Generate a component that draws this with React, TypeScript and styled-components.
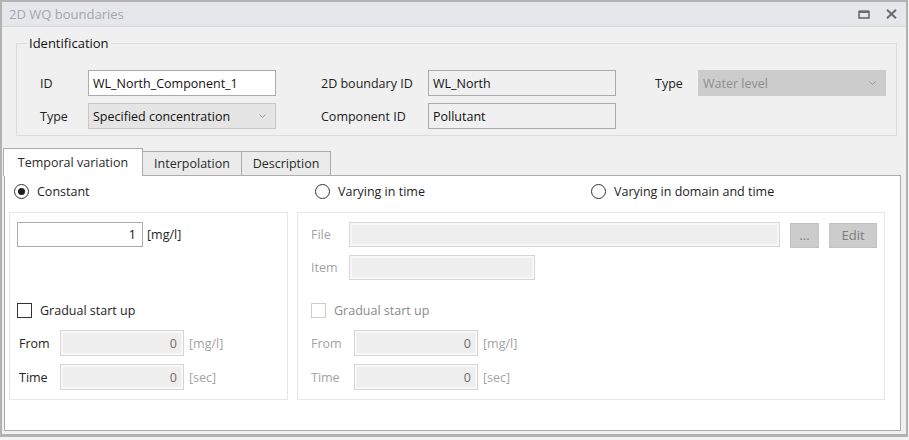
import React from 'react';
import styled, { createGlobalStyle } from 'styled-components';

const GlobalStyle = createGlobalStyle`
  html, body {
    margin: 0;
    padding: 0;
    background: #f3f3f3;
  }
  body {
    font-family: 'Open Sans', 'Noto Sans', sans-serif;
    font-size: 12.5px;
    color: #1e1e1e;
  }
  * {
    box-sizing: border-box;
  }
`;

const Window = styled.div`
  width: 908px;
  height: 437px;
  border: 2px solid #b2b2b2;
  border-bottom-width: 3px;
  background: #f0f0f0;
  display: flex;
  flex-direction: column;
`;

const TitleBar = styled.div`
  height: 25px;
  flex: none;
  display: flex;
  align-items: center;
  padding: 0 8px 0 7px;
  background: #e6e7eb;
  border-bottom: 1px solid #d6d7db;
  color: #a2a6ae;
  font-size: 13px;

  span {
    flex: 1;
  }
`;

const TitleButtons = styled.div`
  display: flex;
  align-items: center;
  gap: 16px;
  margin-right: 1px;
  color: #6b6b6b;

  svg {
    display: block;
  }
`;

const GroupBox = styled.fieldset`
  margin: 8px 9px 0 14px;
  padding: 19px 0 6px 10px;
  border: 1px solid #dcdcdc;
  min-width: 0;

  legend {
    padding: 0 2px;
    line-height: 16px;
    font-size: 13px;
    color: #111;
  }
`;

const IdRow = styled.div`
  display: flex;
  align-items: flex-start;
  margin-left: 13px;
`;

const FieldGroup = styled.div<{ $label: number; $offset: number }>`
  display: grid;
  grid-template-columns: ${p => p.$label}px 188px;
  grid-auto-rows: 26px;
  row-gap: 7px;
  align-items: center;
  margin-left: ${p => p.$offset}px;
`;

const Label = styled.span<{ $muted?: boolean }>`
  color: ${p => (p.$muted ? '#a3a3a3' : '#222')};
  white-space: nowrap;
`;

type BoxKind = 'edit' | 'readonly' | 'disabled';

const TextBox = styled.div<{ $kind: BoxKind; $width?: number; $height?: number; $right?: boolean }>`
  height: ${p => p.$height ?? 26}px;
  width: ${p => (p.$width ? `${p.$width}px` : 'auto')};
  display: flex;
  align-items: center;
  justify-content: ${p => (p.$right ? 'flex-end' : 'flex-start')};
  padding: 0 6px 0 4px;
  white-space: nowrap;
  background: ${p => (p.$kind === 'edit' ? '#ffffff' : p.$kind === 'readonly' ? '#f0f0f0' : '#eeeeee')};
  border: 1px solid ${p => (p.$kind === 'disabled' ? '#d6d6d6' : '#ababab')};
  box-shadow: ${p => (p.$kind === 'disabled' ? 'inset 0 0 0 2px #f8f8f8' : 'none')};
  color: ${p => (p.$kind === 'disabled' ? '#6a6a6a' : '#111')};
`;

const Combo = styled.div<{ $disabled?: boolean }>`
  height: 26px;
  display: flex;
  align-items: center;
  padding: 0 9px 0 4px;
  background: ${p => (p.$disabled ? '#cccccc' : '#e5e5e5')};
  border: 1px solid ${p => (p.$disabled ? '#cccccc' : '#c8c8c8')};
  color: ${p => (p.$disabled ? '#8e8e8e' : '#111')};

  span {
    flex: 1;
  }
`;

const TabArea = styled.div`
  flex: 1;
  display: flex;
  flex-direction: column;
  margin: 12px 5px 3px 0;
`;

const TabStrip = styled.div`
  display: flex;
  align-items: flex-end;
  height: 28px;
  padding-left: 1px;
  margin-bottom: -1px;
  position: relative;
  z-index: 1;
`;

const Tab = styled.div<{ $active?: boolean; $width: number }>`
  width: ${p => p.$width}px;
  height: ${p => (p.$active ? 28 : 24)}px;
  margin-bottom: ${p => (p.$active ? 0 : 1)}px;
  margin-left: ${p => (p.$active ? 0 : -1)}px;
  display: flex;
  align-items: center;
  justify-content: center;
  border: 1px solid #acacac;
  border-bottom: none;
  background: ${p => (p.$active ? '#ffffff' : '#ebebeb')};
  color: #2a2a2a;
  font-size: 12.5px;

  &:first-child {
    margin-left: 0;
  }
`;

const TabPanel = styled.div`
  flex: 1;
  margin-left: 2px;
  background: #ffffff;
  border: 1px solid #acacac;
  padding: 7px 0 0 0;
  display: flex;
  flex-direction: column;
`;

const RadioRow = styled.div`
  display: grid;
  grid-template-columns: 301px 276px 1fr;
  padding-left: 9px;
  height: 16px;
  align-items: center;
`;

const RadioItem = styled.label`
  display: flex;
  align-items: center;
  gap: 8px;
  color: #1e1e1e;
  font-size: 12.5px;
`;

const RadioCircle = styled.span<{ $checked?: boolean }>`
  width: 15px;
  height: 15px;
  border-radius: 50%;
  border: 1px solid #333;
  display: flex;
  align-items: center;
  justify-content: center;

  &::after {
    content: '';
    width: 7px;
    height: 7px;
    border-radius: 50%;
    background: ${p => (p.$checked ? '#1e1e1e' : 'transparent')};
  }
`;

const SubPanels = styled.div`
  display: grid;
  grid-template-columns: 279px 588px;
  column-gap: 9px;
  margin: 13px 0 0 4px;
  height: 188px;
`;

const SubPanel = styled.div<{ $pad: number }>`
  border: 1px solid #e6e6e6;
  padding: 9px 0 9px ${p => p.$pad}px;
  display: flex;
  flex-direction: column;
`;

const InlineRow = styled.div<{ $gap?: number }>`
  display: flex;
  align-items: center;
  gap: ${p => p.$gap ?? 4}px;
`;

const Unit = styled.span<{ $muted?: boolean }>`
  color: ${p => (p.$muted ? '#a3a3a3' : '#1e1e1e')};
`;

const FileGrid = styled.div`
  display: grid;
  grid-template-columns: 38px auto;
  grid-auto-rows: 25px;
  row-gap: 8px;
  align-items: center;
  justify-items: start;
`;

const GrayButton = styled.div<{ $width: number }>`
  width: ${p => p.$width}px;
  height: 25px;
  margin-top: 1px;
  display: flex;
  align-items: center;
  justify-content: center;
  background: #cccccc;
  border: 1px solid #c2c2c2;
  color: #7d7d7d;
  font-size: 13px;
`;

const Gradual = styled.div`
  margin-top: auto;
  display: flex;
  flex-direction: column;
`;

const CheckRow = styled.label<{ $disabled?: boolean }>`
  display: flex;
  align-items: center;
  gap: 8px;
  height: 17px;
  font-size: 12.5px;
  color: ${p => (p.$disabled ? '#8a8a8a' : '#1e1e1e')};
`;

const CheckBox = styled.span<{ $disabled?: boolean }>`
  width: 15px;
  height: 15px;
  border: 1px solid ${p => (p.$disabled ? '#cdcdcd' : '#333')};
  background: #fff;
`;

const RangeGrid = styled.div<{ $label: number; $indent: number }>`
  display: grid;
  grid-template-columns: ${p => p.$label}px 124px auto;
  grid-auto-rows: 26px;
  row-gap: 8px;
  align-items: center;
  margin: 11px 0 0 ${p => p.$indent}px;

  & > ${Unit} {
    margin-left: 5px;
  }
`;

const Chevron = () => (
  <svg width="7" height="4" viewBox="0 0 7 4">
    <path d="M0.5 0.5 L3.5 3.5 L6.5 0.5" fill="none" stroke="#9a9a9a" strokeWidth="1" />
  </svg>
);

const MaximizeIcon = () => (
  <svg width="12" height="9" viewBox="0 0 12 9">
    <rect x="1" y="1.5" width="10" height="6.5" fill="none" stroke="currentColor" strokeWidth="1.6" />
    <rect x="1" y="0.5" width="10" height="2.5" fill="currentColor" />
  </svg>
);

const CloseIcon = () => (
  <svg width="11" height="10" viewBox="0 0 11 10">
    <path d="M1 0.8 L10 9.2 M10 0.8 L1 9.2" stroke="currentColor" strokeWidth="2" />
  </svg>
);

type RangeProps = { label: number; indent: number; muted?: boolean };

const RangeFields = ({ label, indent, muted }: RangeProps) => (
  <RangeGrid $label={label} $indent={indent}>
    <Label $muted={muted}>From</Label>
    <TextBox $kind="disabled" $right>0</TextBox>
    <Unit $muted>[mg/l]</Unit>
    <Label $muted={muted}>Time</Label>
    <TextBox $kind="disabled" $right>0</TextBox>
    <Unit $muted>[sec]</Unit>
  </RangeGrid>
);

export default function App() {
  return (
    <>
      <GlobalStyle />
      <Window>
        <TitleBar>
          <span>2D WQ boundaries</span>
          <TitleButtons>
            <MaximizeIcon />
            <CloseIcon />
          </TitleButtons>
        </TitleBar>

        <GroupBox>
          <legend>Identification</legend>
          <IdRow>
            <FieldGroup $label={48} $offset={0}>
              <Label>ID</Label>
              <TextBox $kind="edit">WL_North_Component_1</TextBox>
              <Label>Type</Label>
              <Combo>
                <span>Specified concentration</span>
                <Chevron />
              </Combo>
            </FieldGroup>
            <FieldGroup $label={107} $offset={45}>
              <Label>2D boundary ID</Label>
              <TextBox $kind="readonly">WL_North</TextBox>
              <Label>Component ID</Label>
              <TextBox $kind="readonly">Pollutant</TextBox>
            </FieldGroup>
            <FieldGroup $label={43} $offset={39}>
              <Label>Type</Label>
              <Combo $disabled>
                <span>Water level</span>
                <Chevron />
              </Combo>
            </FieldGroup>
          </IdRow>
        </GroupBox>

        <TabArea>
          <TabStrip>
            <Tab $active $width={140}>Temporal variation</Tab>
            <Tab $width={100}>Interpolation</Tab>
            <Tab $width={90}>Description</Tab>
          </TabStrip>
          <TabPanel>
            <RadioRow>
              <RadioItem>
                <RadioCircle $checked />
                Constant
              </RadioItem>
              <RadioItem>
                <RadioCircle />
                Varying in time
              </RadioItem>
              <RadioItem>
                <RadioCircle />
                Varying in domain and time
              </RadioItem>
            </RadioRow>

            <SubPanels>
              <SubPanel $pad={7}>
                <InlineRow>
                  <TextBox $kind="edit" $width={126} $height={25} $right>
                    1
                  </TextBox>
                  <Unit>[mg/l]</Unit>
                </InlineRow>
                <Gradual>
                  <CheckRow>
                    <CheckBox />
                    Gradual start up
                  </CheckRow>
                  <RangeFields label={41} indent={2} />
                </Gradual>
              </SubPanel>

              <SubPanel $pad={13}>
                <FileGrid>
                  <Label $muted>File</Label>
                  <InlineRow $gap={10}>
                    <TextBox $kind="disabled" $width={431} $height={25} />
                    <GrayButton $width={29}>...</GrayButton>
                    <GrayButton $width={48}>Edit</GrayButton>
                  </InlineRow>
                  <Label $muted>Item</Label>
                  <TextBox $kind="disabled" $width={186} $height={25} />
                </FileGrid>
                <Gradual>
                  <CheckRow $disabled>
                    <CheckBox $disabled />
                    Gradual start up
                  </CheckRow>
                  <RangeFields label={43} indent={0} muted />
                </Gradual>
              </SubPanel>
            </SubPanels>
          </TabPanel>
        </TabArea>
      </Window>
    </>
  );
}
